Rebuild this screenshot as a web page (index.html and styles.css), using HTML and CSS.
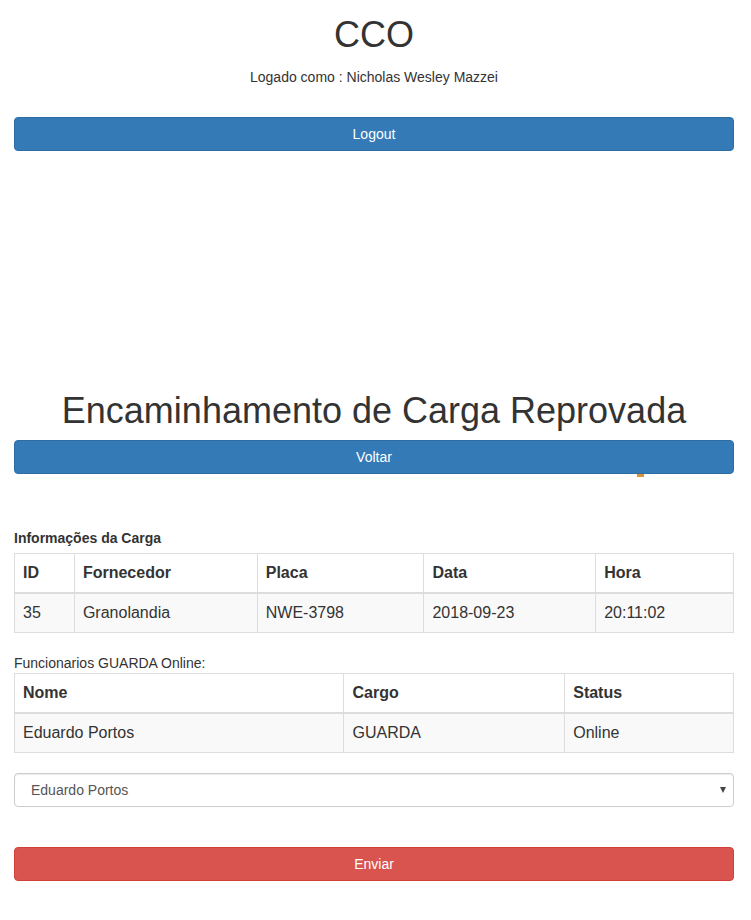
FILE: index.html
```html
<!DOCTYPE html>
<html lang="pt">
<head>
<meta charset="utf-8">
<title>CCO</title>
<link rel="stylesheet" href="styles.css">
</head>
<body>
<div class="container">
  <header class="top">
    <h1 class="title">CCO</h1>
    <p class="logged">Logado como : Nicholas Wesley Mazzei</p>
    <button class="btn btn-primary">Logout</button>
  </header>

  <main class="content">
    <h1 class="page-title">Encaminhamento de Carga Reprovada</h1>
    <button class="btn btn-primary">Voltar</button>
    <div class="mark"></div>

    <label class="section-label">Informações da Carga</label>
    <table class="table">
      <thead>
        <tr>
          <th class="c-id">ID</th>
          <th class="c-forn">Fornecedor</th>
          <th class="c-placa">Placa</th>
          <th class="c-data">Data</th>
          <th class="c-hora">Hora</th>
        </tr>
      </thead>
      <tbody>
        <tr>
          <td>35</td>
          <td>Granolandia</td>
          <td>NWE-3798</td>
          <td>2018-09-23</td>
          <td>20:11:02</td>
        </tr>
      </tbody>
    </table>

    <div class="plain-label">Funcionarios GUARDA Online:</div>
    <table class="table">
      <thead>
        <tr>
          <th class="c-nome">Nome</th>
          <th class="c-cargo">Cargo</th>
          <th class="c-status">Status</th>
        </tr>
      </thead>
      <tbody>
        <tr>
          <td>Eduardo Portos</td>
          <td>GUARDA</td>
          <td>Online</td>
        </tr>
      </tbody>
    </table>

    <div class="select-wrap">
      <select class="form-control">
        <option>Eduardo Portos</option>
      </select>
      <span class="arrow"></span>
    </div>

    <button class="btn btn-danger">Enviar</button>
  </main>
</div>
</body>
</html>
```

FILE: styles.css
```css
* { box-sizing: border-box; }

html, body {
  margin: 0;
  padding: 0;
  background: #fff;
}

body {
  font-family: "Liberation Sans", Arial, Helvetica, sans-serif;
  font-size: 14px;
  line-height: 20px;
  color: #333;
}

.container {
  padding: 0 17px 0 14px;
}

.top {
  display: flex;
  flex-direction: column;
}

.title {
  margin: 15px 0 12px;
  font-size: 36px;
  font-weight: 500;
  line-height: 39.6px;
  text-align: center;
  color: #333;
}

.logged {
  margin: 0 0 30px;
  text-align: center;
  font-size: 14px;
  line-height: 20px;
}

.btn {
  display: block;
  width: 100%;
  height: 34px;
  padding: 6px 12px;
  font-family: inherit;
  font-size: 14px;
  line-height: 20px;
  color: #fff;
  text-align: center;
  border: 1px solid transparent;
  border-radius: 4px;
  cursor: pointer;
}

.btn-primary {
  background: #337ab7;
  border-color: #2e6da4;
}

.btn-danger {
  background: #d9534f;
  border-color: #d43f3a;
}

.content {
  display: flex;
  flex-direction: column;
}

.page-title {
  margin: 240px 0 10px;
  font-size: 36px;
  font-weight: 500;
  line-height: 39.6px;
  text-align: center;
  color: #333;
}

.mark {
  width: 7px;
  height: 3px;
  margin-left: 623px;
  background: #e0913a;
}

.section-label {
  display: block;
  margin: 51px 0 5px;
  font-size: 14px;
  font-weight: bold;
  line-height: 20px;
}

.plain-label {
  font-size: 14px;
  line-height: 20px;
}

.table {
  width: 100%;
  border-collapse: collapse;
  border-spacing: 0;
  margin-bottom: 20px;
  font-size: 16px;
  line-height: 22px;
  border: 1px solid #ddd;
}

.table th,
.table td {
  padding: 8px;
  text-align: left;
  vertical-align: top;
  border: 1px solid #ddd;
}

.table th {
  font-weight: bold;
  border-bottom: 2px solid #ddd;
}

.table tbody tr {
  background: #f9f9f9;
}

.c-id { width: 60px; }
.c-forn { width: 183px; }
.c-placa { width: 167px; }
.c-data { width: 172px; }
.c-hora { width: 138px; }

.c-nome { width: 330px; }
.c-cargo { width: 221px; }
.c-status { width: 169px; }

.select-wrap {
  position: relative;
  margin-bottom: 40px;
}

.form-control {
  display: block;
  width: 100%;
  height: 34px;
  padding: 6px 16px;
  font-family: inherit;
  font-size: 14px;
  line-height: 20px;
  color: #555;
  background: #fff;
  border: 1px solid #ccc;
  border-radius: 4px;
  box-shadow: inset 0 1px 1px rgba(0, 0, 0, 0.075);
  -webkit-appearance: none;
  appearance: none;
}

.arrow {
  position: absolute;
  right: 8px;
  top: 14px;
  width: 0;
  height: 0;
  border-left: 3.5px solid transparent;
  border-right: 3.5px solid transparent;
  border-top: 6px solid #444;
  pointer-events: none;
}
```
